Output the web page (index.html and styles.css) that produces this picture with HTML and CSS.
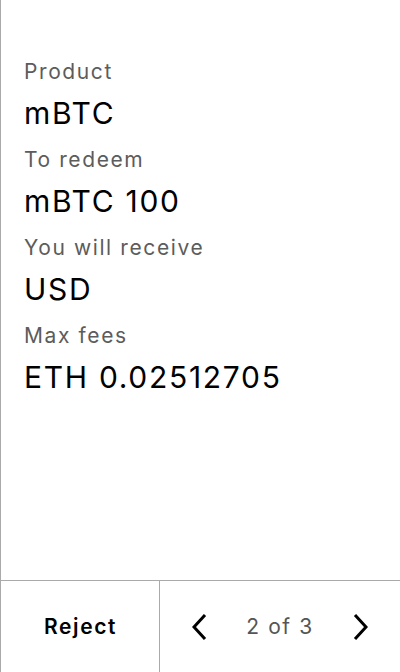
FILE: index.html
```html
<!DOCTYPE html>
<html>
<head>
<meta charset="utf-8">
<link rel="stylesheet" href="styles.css">
</head>
<body>
<div class="screen">
  <main class="content">
    <div class="field">
      <div class="label">Product</div>
      <div class="value">mBTC</div>
    </div>
    <div class="field">
      <div class="label">To redeem</div>
      <div class="value">mBTC 100</div>
    </div>
    <div class="field">
      <div class="label">You will receive</div>
      <div class="value">USD</div>
    </div>
    <div class="field">
      <div class="label">Max fees</div>
      <div class="value">ETH 0.02512705</div>
    </div>
  </main>
  <footer class="footer">
    <button class="reject">Reject</button>
    <div class="pager">
      <svg class="chev" width="16" height="26" viewBox="0 0 16 26"><path d="M13 1 L2 13 L13 25" fill="none" stroke="#000" stroke-width="3"/></svg>
      <span class="count">2 of 3</span>
      <svg class="chev" width="16" height="26" viewBox="0 0 16 26"><path d="M3 1 L14 13 L3 25" fill="none" stroke="#000" stroke-width="3"/></svg>
    </div>
  </footer>
</div>
</body>
</html>
```

FILE: styles.css
```css
* { box-sizing: border-box; }
html, body { margin: 0; padding: 0; background: #fff; }
body { font-family: Inter, "Noto Sans", sans-serif; }
.screen {
  width: 400px;
  height: 672px;
  border-left: 1px solid #aaa;
  display: flex;
  flex-direction: column;
}
.content {
  flex: 1;
  padding: 58px 23px 0;
  display: flex;
  flex-direction: column;
  gap: 15px;
}
.label {
  font-size: 21px;
  line-height: 28px;
  letter-spacing: 1.6px;
  color: #5c5c5c;
}
.value {
  margin-top: 9px;
  font-size: 30px;
  line-height: 36px;
  letter-spacing: 1.7px;
  color: #000;
}
.footer {
  height: 92px;
  border-top: 1px solid #aaa;
  display: flex;
}
.reject {
  width: 159px;
  border: 0;
  border-right: 1px solid #aaa;
  background: #fff;
  font-family: inherit;
  font-size: 21px;
  font-weight: 600;
  letter-spacing: 1.6px;
  color: #000;
  padding: 0 0 0 1px;
}
.pager {
  flex: 1;
  display: flex;
  align-items: center;
  justify-content: space-between;
  padding: 0 32px 0 32px;
}
.count {
  font-size: 21px;
  letter-spacing: 1.6px;
  color: #555;
}
```
